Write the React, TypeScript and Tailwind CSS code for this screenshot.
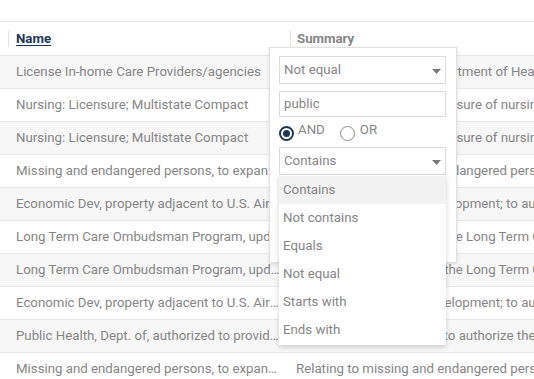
import React from 'react';

const rows = [
  {
    name: 'License In-home Care Providers/agencies',
    summary: 'Relating to aid by the Department of Health; to provide for licensure',
  },
  {
    name: 'Nursing: Licensure; Multistate Compact',
    summary: 'Relating to multi-state licensure of nursing; to adopt the compact',
  },
  {
    name: 'Nursing: Licensure; Multistate Compact',
    summary: 'Relating to multi-state licensure of nursing; to adopt the compact',
  },
  {
    name: 'Missing and endangered persons, to expand alert system',
    summary: 'Relating to missing and endangered persons; to expand the alert',
  },
  {
    name: 'Economic Dev, property adjacent to U.S. Air Force bases',
    summary: 'Relating to economic development; to authorize counties',
  },
  {
    name: 'Long Term Care Ombudsman Program, updated provisions',
    summary: 'Relating to the Offices of the Long Term Care Ombudsman',
  },
  {
    name: 'Long Term Care Ombudsman Program, updated provisions',
    summary: 'Relating to the Offices of the Long Term Care Ombudsman',
  },
  {
    name: 'Economic Dev, property adjacent to U.S. Air Force bases',
    summary: 'Relating to economic development; to authorize counties',
  },
  {
    name: 'Public Health, Dept. of, authorized to provide services',
    summary: 'Relating to public health; to authorize the department',
  },
  {
    name: 'Missing and endangered persons, to expand alert system',
    summary: 'Relating to missing and endangered persons; to expand the alert',
  },
];

const options = ['Contains', 'Not contains', 'Equals', 'Not equal', 'Starts with', 'Ends with'];

function Caret() {
  return (
    <svg width="9" height="5" viewBox="0 0 9 5" className="absolute right-[4px] top-[12px]">
      <path d="M0 0 L9 0 L4.5 5 Z" fill="#7a7a7a" />
    </svg>
  );
}

export default function App() {
  return (
    <div className="relative h-[379px] w-[534px] overflow-hidden bg-white font-['Roboto',sans-serif] text-[13.25px] text-[#858585]">
      <div className="h-[22px] border-b border-[#e6e6e6]" />

      {/* header */}
      <div className="grid h-[34px] grid-cols-[290px_1fr] items-center border-b border-[#e6e6e6] font-bold">
        <div className="flex items-center pl-2">
          <span className="h-4 w-px bg-[#e2e2e2]" />
          <span className="ml-[7px] text-[#1c3659] underline underline-offset-2">Name</span>
        </div>
        <div className="flex items-center">
          <span className="h-4 w-px bg-[#e2e2e2]" />
          <span className="ml-[6px]">Summary</span>
        </div>
      </div>

      {rows.map((r, i) => (
        <div
          key={i}
          className={`grid h-[33px] grid-cols-[290px_1fr] items-center border-b border-[#e8e8e8] ${
            i % 2 === 0 ? 'bg-[#f7f7f7]' : 'bg-white'
          }`}
        >
          <div className="truncate pl-4 pr-[10px]">{r.name}</div>
          <div className="overflow-hidden whitespace-nowrap pl-[6px]">{r.summary}</div>
        </div>
      ))}

      {/* filter popup */}
      <div className="absolute left-[269px] top-[47px] h-[216px] w-[188px] border border-[#e0e0e0] bg-white px-[9px] pt-[8px] shadow-[0_1px_4px_rgba(0,0,0,0.12)]">
        <div className="relative flex h-[28px] w-[167px] items-center border border-[#dcdcdc] pl-[4px]">
          Not equal
          <Caret />
        </div>
        <div className="mt-[7px] flex h-[26px] w-[167px] items-center border border-[#dcdcdc] pl-[4px]">
          public
        </div>
        <div className="flex h-[30px] items-center">
          <span className="mt-[3px] flex h-[15px] w-[15px] items-center justify-center rounded-full border-2 border-[#1c3659]">
            <span className="h-[7px] w-[7px] rounded-full bg-[#1c3659]" />
          </span>
          <span className="ml-[4px] -mt-[5px]">AND</span>
          <span className="ml-[15px] mt-[3px] h-[15px] w-[15px] rounded-full border-[1.5px] border-[#8a8a8a]" />
          <span className="ml-[5px] -mt-[5px]">OR</span>
        </div>
        <div className="relative flex h-[28px] w-[167px] items-center border border-[#dcdcdc] pl-[4px]">
          Contains
          <Caret />
        </div>
      </div>

      {/* dropdown list */}
      <div className="absolute left-[279px] top-[175px] w-[167px] bg-white pt-[1px] pb-[1px] shadow-[0_2px_5px_rgba(0,0,0,0.18)]">
        {options.map((o, i) => (
          <div
            key={o}
            className={`flex h-[28px] items-center pl-[4px] ${i === 0 ? 'bg-[#f2f2f2]' : ''}`}
          >
            {o}
          </div>
        ))}
      </div>
    </div>
  );
}
